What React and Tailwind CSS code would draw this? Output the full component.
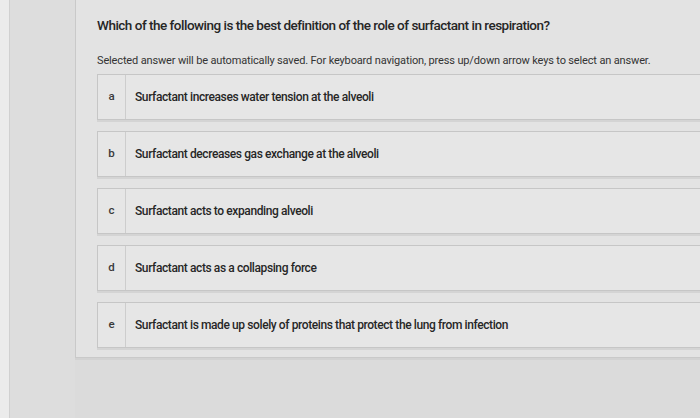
import React from 'react';

const OPTIONS = [
  { key: 'a', text: 'Surfactant increases water tension at the alveoli' },
  { key: 'b', text: 'Surfactant decreases gas exchange at the alveoli' },
  { key: 'c', text: 'Surfactant acts to expanding alveoli' },
  { key: 'd', text: 'Surfactant acts as a collapsing force' },
  { key: 'e', text: 'Surfactant is made up solely of proteins that protect the lung from infection' },
];

const font = { fontFamily: '"Roboto", "Liberation Sans", sans-serif' };

export default function App() {
  return (
    <div className="w-[700px] h-[418px] overflow-hidden flex bg-[#dbdbdb] text-[#2b2b2b]" style={font}>
      {/* left screen edge */}
      <div className="w-[10px] shrink-0 bg-[#ebebeb] border-r border-[#d0d0d0]" />
      <div className="w-[65px] shrink-0 bg-[#dddddd]" />

      {/* question card */}
      <div className="w-[660px] h-[358px] shrink-0 bg-[#e3e3e3] border-l border-b border-[#c9c9c9] shadow-[0_2px_0_#d2d2d2] pl-[21px] pt-[16px]">
        <p className="text-[13.5px] leading-[18px] tracking-[-0.5px] font-medium text-[#262626]">
          Which of the following is the best definition of the role of surfactant in respiration?
        </p>
        <p className="mt-[20px] text-[11px] leading-[14px] tracking-[-0.15px] text-[#333]">
          Selected answer will be automatically saved. For keyboard navigation, press up/down arrow keys to select an answer.
        </p>

        <div className="mt-[6px] flex flex-col gap-[11px]">
          {OPTIONS.map((o) => (
            <div
              key={o.key}
              className="h-[46px] w-[700px] flex items-stretch bg-[#e6e6e6] border border-[#c6c6c6] shadow-[0_2px_0_#d4d4d4]"
            >
              <div className="w-[28px] shrink-0 border-r border-[#cdcdcd] flex items-center justify-center text-[11.5px] font-medium text-[#3a3a3a]">
                {o.key}
              </div>
              <div className="flex items-center pl-[9px] text-[12px] tracking-[-0.4px] font-medium text-[#262626]">
                {o.text}
              </div>
            </div>
          ))}
        </div>
      </div>
    </div>
  );
}
